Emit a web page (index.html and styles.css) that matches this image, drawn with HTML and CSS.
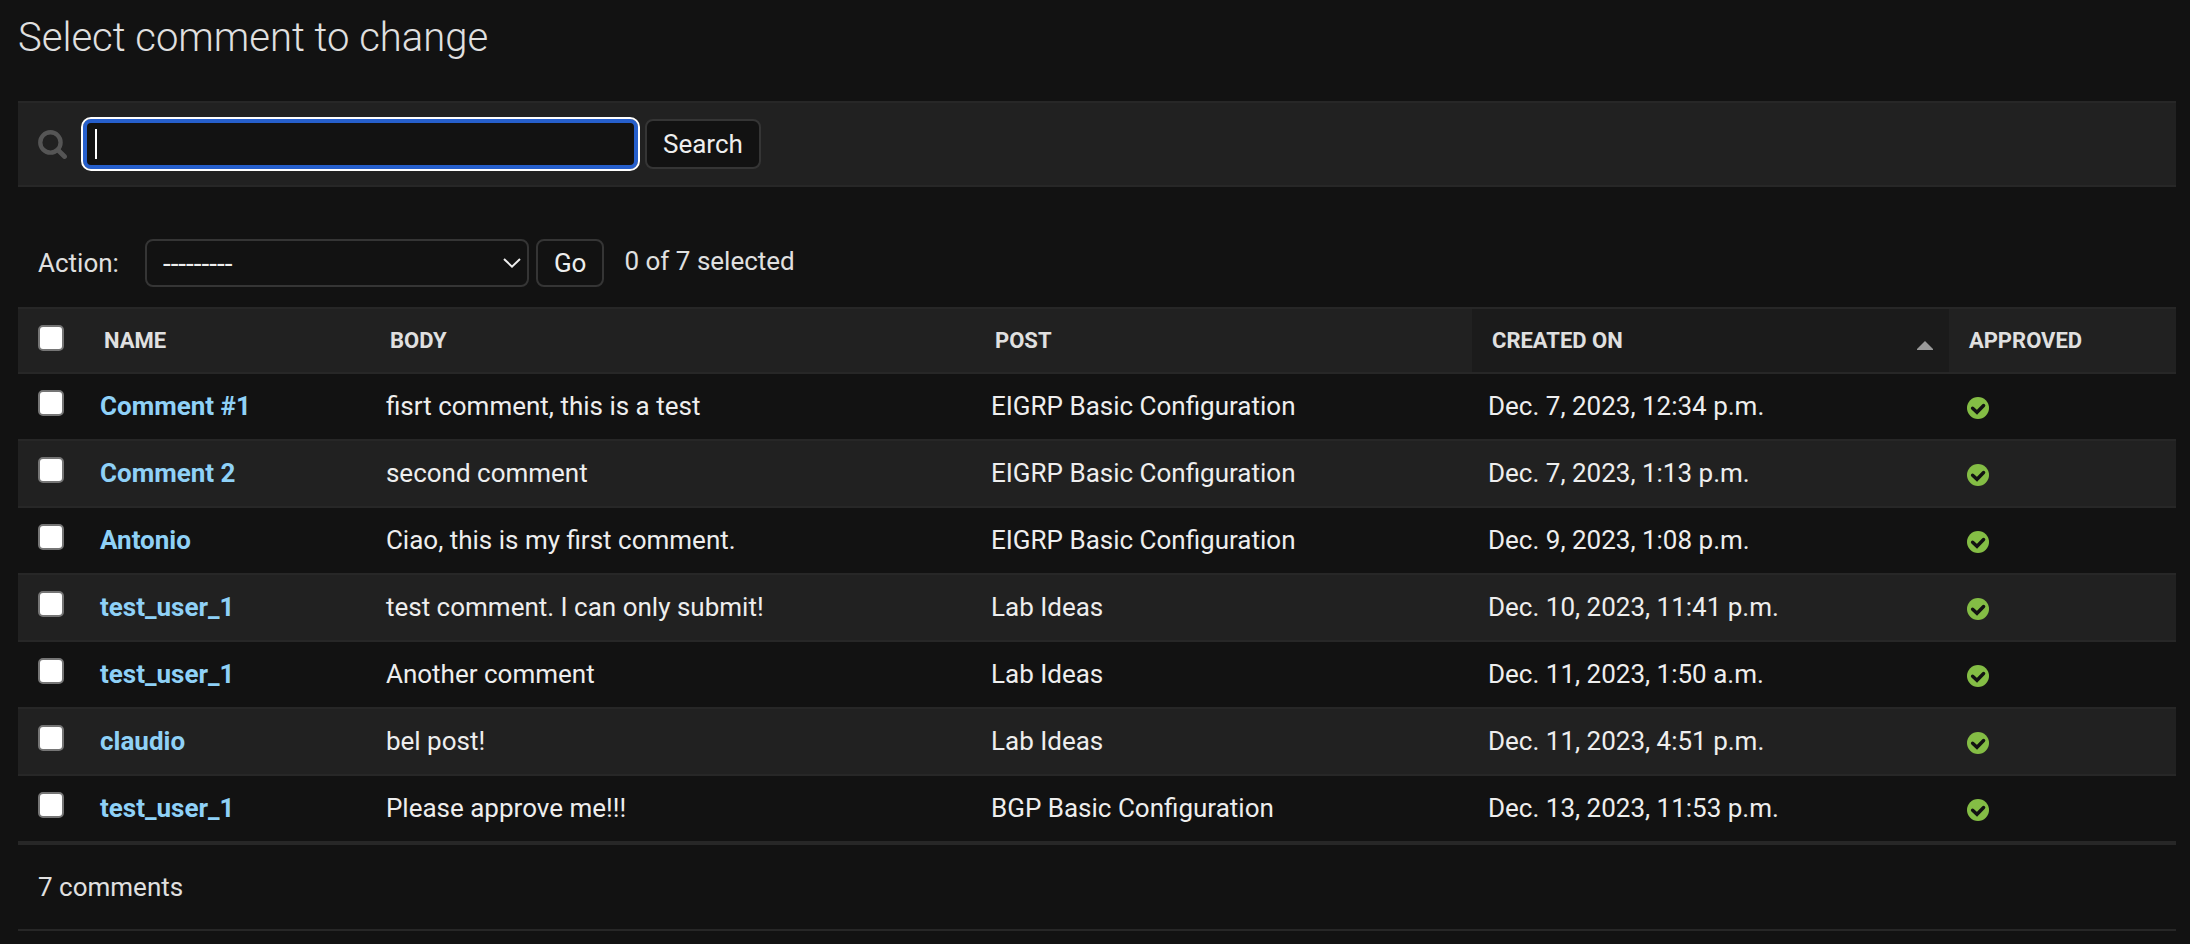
FILE: index.html
```html
<!DOCTYPE html>
<html lang="en">
<head>
<meta charset="utf-8">
<meta name="viewport" content="width=device-width, initial-scale=1">
<title>Select comment to change</title>
<link rel="stylesheet" href="styles.css">
</head>
<body>
<svg class="sprite" aria-hidden="true">
  <symbol id="icon-yes" viewBox="0 0 22 22">
    <circle cx="11" cy="11" r="11" fill="#84bd45"/>
    <path d="M5.6 11.2L10 15.3L16.6 8.5" fill="none" stroke="#121212" stroke-width="3.4" stroke-linecap="round"/>
  </symbol>
</svg>
<main class="content">
  <h1 class="title">Select comment to change</h1>

  <form class="toolbar" onsubmit="return false">
    <label class="search-label" for="searchbar" aria-label="Search comments">
      <svg class="search-icon" viewBox="0 0 28 28" aria-hidden="true">
        <circle cx="12" cy="12" r="9.8" fill="none" stroke="#555" stroke-width="4.2"/>
        <path d="M19.5 19.5L25.6 25.6" fill="none" stroke="#555" stroke-width="4.6" stroke-linecap="round"/>
      </svg>
    </label>
    <span class="search-field">
      <input class="searchbar" type="text" id="searchbar" name="q" placeholder=" " autofocus>
      <span class="caret" aria-hidden="true"></span>
    </span>
    <button class="button search-button" type="submit">Search</button>
  </form>

  <form class="changelist" onsubmit="return false">
    <div class="actions">
      <label for="action">Action:</label>
      <span class="select-wrap">
        <select class="action-select" id="action" name="action">
          <option>---------</option>
        </select>
        <svg class="chevron" viewBox="0 0 18 10" aria-hidden="true"><path d="M1 1L9 8.6L17 1" fill="none" stroke="#eee" stroke-width="2"/></svg>
      </span>
      <button class="button go-button" type="submit">Go</button>
      <span class="counter">0 of 7 selected</span>
    </div>

    <table class="results">
      <colgroup>
        <col class="col-check"><col class="col-name"><col class="col-body"><col class="col-post"><col class="col-created"><col class="col-approved">
      </colgroup>
      <thead>
        <tr>
          <th class="check-cell"><input class="check" type="checkbox" aria-label="Select all comments"></th>
          <th>Name</th>
          <th>Body</th>
          <th>Post</th>
          <th class="sorted"><div class="sort-row">Created on <svg class="sort-icon" viewBox="0 0 16 9" aria-hidden="true"><path d="M8 0L16 8V9H0V8Z" fill="#999"/></svg></div></th>
          <th>Approved</th>
        </tr>
      </thead>
      <tbody>
        <tr>
          <td class="check-cell"><input class="check" type="checkbox" aria-label="Select Comment #1"></td>
          <td><a class="name" href="#">Comment #1</a></td><td>fisrt comment, this is a test</td><td>EIGRP Basic Configuration</td><td>Dec. 7, 2023, 12:34 p.m.</td>
          <td><svg class="yes" role="img" aria-label="True"><use href="#icon-yes"/></svg></td>
        </tr>
        <tr>
          <td class="check-cell"><input class="check" type="checkbox" aria-label="Select Comment 2"></td>
          <td><a class="name" href="#">Comment 2</a></td><td>second comment</td><td>EIGRP Basic Configuration</td><td>Dec. 7, 2023, 1:13 p.m.</td>
          <td><svg class="yes" role="img" aria-label="True"><use href="#icon-yes"/></svg></td>
        </tr>
        <tr>
          <td class="check-cell"><input class="check" type="checkbox" aria-label="Select Antonio"></td>
          <td><a class="name" href="#">Antonio</a></td><td>Ciao, this is my first comment.</td><td>EIGRP Basic Configuration</td><td>Dec. 9, 2023, 1:08 p.m.</td>
          <td><svg class="yes" role="img" aria-label="True"><use href="#icon-yes"/></svg></td>
        </tr>
        <tr>
          <td class="check-cell"><input class="check" type="checkbox" aria-label="Select test_user_1"></td>
          <td><a class="name" href="#">test_user_1</a></td><td>test comment. I can only submit!</td><td>Lab Ideas</td><td>Dec. 10, 2023, 11:41 p.m.</td>
          <td><svg class="yes" role="img" aria-label="True"><use href="#icon-yes"/></svg></td>
        </tr>
        <tr>
          <td class="check-cell"><input class="check" type="checkbox" aria-label="Select test_user_1"></td>
          <td><a class="name" href="#">test_user_1</a></td><td>Another comment</td><td>Lab Ideas</td><td>Dec. 11, 2023, 1:50 a.m.</td>
          <td><svg class="yes" role="img" aria-label="True"><use href="#icon-yes"/></svg></td>
        </tr>
        <tr>
          <td class="check-cell"><input class="check" type="checkbox" aria-label="Select claudio"></td>
          <td><a class="name" href="#">claudio</a></td><td>bel post!</td><td>Lab Ideas</td><td>Dec. 11, 2023, 4:51 p.m.</td>
          <td><svg class="yes" role="img" aria-label="True"><use href="#icon-yes"/></svg></td>
        </tr>
        <tr>
          <td class="check-cell"><input class="check" type="checkbox" aria-label="Select test_user_1"></td>
          <td><a class="name" href="#">test_user_1</a></td><td>Please approve me!!!</td><td>BGP Basic Configuration</td><td>Dec. 13, 2023, 11:53 p.m.</td>
          <td><svg class="yes" role="img" aria-label="True"><use href="#icon-yes"/></svg></td>
        </tr>
      </tbody>
    </table>
    <p class="paginator">7 comments</p>
  </form>
</main>
</body>
</html>
```

FILE: styles.css
```css
:root {
  --bg: #121212;
  --raised: #212121;
  --hairline: #272727;
  --border: #353535;
  --text: #eeeeee;
  --text-quiet: #e0e0e0;
  --link: #8fd1f7;
}

* { box-sizing: border-box; }

body {
  margin: 0;
  background: var(--bg);
  color: var(--text);
  font-family: Roboto, "Liberation Sans", sans-serif;
  font-size: 26px;
  line-height: 33px;
}

.sprite { position: absolute; width: 0; height: 0; }

.content { padding: 14px 14px 0 18px; }

.title {
  margin: 0 0 39px;
  color: var(--text-quiet);
  font-size: 40px;
  font-weight: 300;
  line-height: 48px;
}

.toolbar {
  display: flex;
  align-items: center;
  height: 86px;
  margin-bottom: 52px;
  padding: 0 20px;
  border: solid var(--hairline);
  border-width: 2px 0;
  background: var(--raised);
}

.search-label { display: flex; margin-right: 16px; }
.search-icon { width: 29px; height: 29px; }

.search-field { position: relative; width: 555px; }

.searchbar {
  display: block;
  width: 100%;
  height: 50px;
  padding: 0 8px;
  border: 4px solid #265fcc;
  border-radius: 8px;
  outline: 2px solid #fff;
  outline-offset: 0;
  background: var(--bg);
  color: var(--text);
  caret-color: transparent;
  font: inherit;
}

/* Two-pixel insertion mark, shown while the field is empty. */
.caret {
  position: absolute;
  top: 10px;
  left: 12px;
  width: 2px;
  height: 30px;
  background: #fff;
  pointer-events: none;
}

.searchbar:not(:placeholder-shown) { caret-color: auto; }
.searchbar:not(:placeholder-shown) + .caret { display: none; }

.button {
  border: 2px solid var(--border);
  border-radius: 8px;
  background: var(--bg);
  color: var(--text);
  font: inherit;
}

.search-button { height: 50px; margin-left: 7px; padding: 0 16px; }

.actions {
  display: flex;
  align-items: center;
  margin-bottom: 20px;
  padding: 0 20px;
  color: var(--text-quiet);
}

.select-wrap { position: relative; width: 384px; margin-left: 26px; }

.action-select {
  display: block;
  width: 100%;
  height: 48px;
  padding: 0 16px;
  appearance: none;
  border: 2px solid var(--border);
  border-radius: 8px;
  background: var(--bg);
  color: var(--text);
  font: inherit;
  font-size: 28px;
}

.chevron {
  position: absolute;
  top: 19px;
  right: 8px;
  width: 18px;
  height: 10px;
  pointer-events: none;
}

.go-button { height: 48px; margin-left: 7px; padding: 0 16px; }
.counter { margin-left: 20px; padding-bottom: 4px; }

.results {
  width: 100%;
  table-layout: fixed;
  border-collapse: separate;
  border-spacing: 0;
  border-bottom: 2px solid var(--hairline);
}

.col-check { width: 66px; }
.col-name { width: 13.25%; }
.col-body { width: 28.04%; }
.col-post { width: 23.03%; }
.col-created { width: 22.1%; }

.results th,
.results td {
  border-bottom: 2px solid var(--hairline);
  text-align: left;
  vertical-align: top;
}

.results th {
  padding: 16px 20px;
  border-top: 2px solid var(--hairline);
  background: var(--raised);
  color: var(--text-quiet);
  font-size: 22px;
  font-weight: 700;
  line-height: 31px;
  text-transform: uppercase;
}

.results td { height: 67px; padding: 16px; }

.results .check-cell { padding: 16px 20px 0; }

.results tbody tr:nth-child(even) { background: var(--raised); }

.results .sorted { padding-right: 16px; background: #1b1b1b; }

.sort-row { display: flex; align-items: center; justify-content: space-between; }
.sort-icon { width: 16px; height: 9px; margin-top: 10px; }

.check {
  display: block;
  width: 26px;
  height: 26px;
  margin: 0;
  appearance: none;
  border: 2px solid #757575;
  border-radius: 5px;
  background: #fff;
}
.check:checked { background: #265fcc; }

.name { color: var(--link); font-weight: 700; text-decoration: none; }

.yes { display: block; width: 22px; height: 22px; margin: 7px 0 0 2px; }

.paginator {
  margin: 0;
  padding: 26px 20px 25px;
  border-bottom: 2px solid var(--hairline);
  color: var(--text-quiet);
}
```
